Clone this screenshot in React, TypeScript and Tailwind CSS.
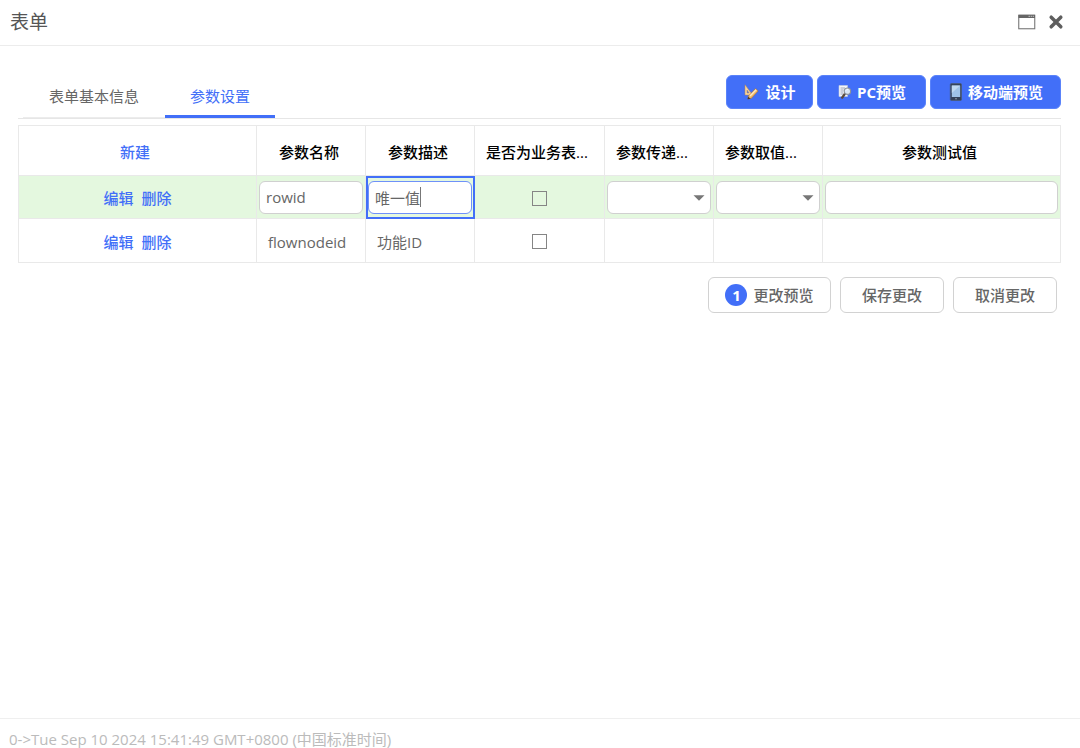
import { useState } from "react";

const font = "font-['Open_Sans','Noto_Sans_CJK_SC',sans-serif]";

function DesignIcon() {
  return (
    <svg width="16" height="16" viewBox="0 0 16 16" aria-hidden="true">
      <path d="M2 0.8 L2 11 L9.6 11 Z M4 6 L6.2 9 L4 9 Z" fill="#f6d6a4" fillRule="evenodd" stroke="#c08a48" strokeWidth="0.5" />
      <path d="M5.4 12 L12.6 4.6 L15.2 7 L8.2 14.4 L4.8 15 Z" fill="#f0b868" stroke="#9a6427" strokeWidth="0.5" />
      <path d="M7 12 L13.2 5.8" stroke="#fdebc6" strokeWidth="1.4" />
      <path d="M4.6 15.2 L5.2 12.8 L7.6 14.7 Z" fill="#4a3a2a" />
    </svg>
  );
}

function PreviewIcon() {
  return (
    <svg width="16" height="16" viewBox="0 0 16 16" aria-hidden="true">
      <path d="M2 1.5 H10.5 V12.5 H2 Z" fill="#f4f6fa" stroke="#c3cddd" strokeWidth="0.6" />
      <path d="M3.5 4 H8 M3.5 6 H6.5 M3.5 8 H6 M3.5 10 H6" stroke="#8b96a8" strokeWidth="0.8" />
      <path d="M8 9.6 L5.2 13.6" stroke="#5b4a3c" strokeWidth="2.4" strokeLinecap="round" />
      <circle cx="10.4" cy="7.2" r="3.2" fill="#d9e6f5" stroke="#8d949c" strokeWidth="1.2" />
      <path d="M8.9 6.6 Q9.6 5.3 11.1 5.5" stroke="#ffffff" strokeWidth="0.9" fill="none" />
    </svg>
  );
}

function PhoneIcon() {
  return (
    <svg width="16" height="18" viewBox="0 0 16 18" aria-hidden="true">
      <rect x="2.3" y="0.5" width="11.2" height="17" rx="1.2" fill="#35435a" stroke="#4a5c7c" strokeWidth="0.8" />
      <rect x="3.8" y="2.6" width="8.4" height="11.4" fill="#9fc3e8" />
      <path d="M3.8 2.6 H12.2 L3.8 10 Z" fill="#c0d9f1" />
      <circle cx="8" cy="15.8" r="0.8" fill="#9aa4b2" />
    </svg>
  );
}

function WindowIcon() {
  return (
    <svg width="18" height="16" viewBox="0 0 18 16" aria-hidden="true">
      <rect x="0.75" y="1.25" width="16" height="13.5" fill="#fff" stroke="#777" strokeWidth="1.1" />
      <rect x="0.5" y="0.8" width="16.5" height="3.2" fill="#666" />
      <path d="M10.5 2.3 H12 M12.7 2.3 H14 M14.7 2.3 H16" stroke="#ccc" strokeWidth="0.9" />
    </svg>
  );
}

function CloseIcon() {
  return (
    <svg width="16" height="16" viewBox="0 0 16 16" aria-hidden="true">
      <path d="M3.2 3.2 L12.8 12.8 M12.8 3.2 L3.2 12.8" stroke="#5e5e5e" strokeWidth="3.5" strokeLinecap="round" />
    </svg>
  );
}

const columns = [
  { id: "name", label: "参数名称", clipped: false },
  { id: "desc", label: "参数描述", clipped: false },
  { id: "biz", label: "是否为业务表...", clipped: true },
  { id: "pass", label: "参数传递...", clipped: true },
  { id: "source", label: "参数取值...", clipped: true },
  { id: "test", label: "参数测试值", clipped: false },
];

const primary =
  "flex h-[34px] items-center rounded-md border border-[#5a83fa] bg-[#426ff8] font-bold text-white";
const secondary =
  "flex h-9 items-center justify-center rounded-md border border-[#d2d2d2] bg-white font-medium text-[#666]";
const field =
  "block h-[33px] w-full rounded-md border bg-white px-[6px] text-[#666] outline-none";
const box =
  "block size-[15px] mx-auto appearance-none border border-[#858585] checked:bg-[#426ff8]";

function RowActions() {
  return (
    <div className="flex justify-center gap-2 font-medium text-[#426ff8]">
      <a href="#edit">编辑</a>
      <a href="#delete">删除</a>
    </div>
  );
}

function Dropdown({ labelledBy }: { labelledBy: string }) {
  return (
    <div className="relative">
      <select aria-labelledby={labelledBy} className={`${field} appearance-none border-[#d0d0d0]`}>
        <option value=""></option>
      </select>
      <svg className="pointer-events-none absolute top-[14px] right-[6px]" width="12" height="6" viewBox="0 0 12 6" aria-hidden="true">
        <path d="M0.5 0.3 H11.5 L6 5.8 Z" fill="#777" />
      </svg>
    </div>
  );
}

export default function App() {
  const [name, setName] = useState("rowid");
  const [desc, setDesc] = useState("唯一值");
  const [test, setTest] = useState("");

  return (
    <div className={`flex min-h-screen flex-col bg-white text-[15px] leading-5 text-[#666] ${font}`}>
      <header className="flex h-[46px] items-center justify-between border-b border-[#ececec] pr-4 pb-[2px] pl-[10px]">
        <h1 className="text-[19px] leading-6 text-[#555]">表单</h1>
        <div className="flex items-center gap-3">
          <button type="button" aria-label="最大化"><WindowIcon /></button>
          <button type="button" aria-label="关闭"><CloseIcon /></button>
        </div>
      </header>

      <main className="flex-1 pt-[29px] pr-[19px] pl-[18px]">
        <div className="flex h-11 justify-between border-b border-[#e6e6e6]">
          <div role="tablist" className="flex pl-[5px]">
            <button type="button" role="tab" aria-selected="false" className="w-[142px] border-b border-[#ececec] pb-px">
              表单基本信息
            </button>
            <button type="button" role="tab" aria-selected="true" className="w-[110px] border-b-3 border-[#426ff8] pt-px text-[#426ff8]">
              参数设置
            </button>
          </div>
          <div className="flex gap-1">
            <button type="button" className={`${primary} w-[87px] justify-center gap-[6px]`}>
              <DesignIcon />设计
            </button>
            <button type="button" className={`${primary} w-[109px] justify-center gap-1`}>
              <PreviewIcon />PC预览
            </button>
            <button type="button" className={`${primary} w-[131px] justify-center gap-1`}>
              <PhoneIcon />移动端预览
            </button>
          </div>
        </div>

        <table className="mt-[6px] w-full table-fixed border-collapse [&_td]:border [&_td]:border-[#e9e9e9] [&_th]:border [&_th]:border-[#e9e9e9]">
          <colgroup>
            <col />
            <col className="w-[109px]" />
            <col className="w-[109px]" />
            <col className="w-[130px]" />
            <col className="w-[109px]" />
            <col className="w-[109px]" />
            <col />
          </colgroup>
          <thead>
            <tr className="h-[50px] text-black">
              <th className="pt-[2px] pr-[5px] pb-0 font-medium text-[#426ff8]">
                <a href="#new">新建</a>
              </th>
              {columns.map((c) => (
                <th
                  key={c.id}
                  id={c.id}
                  className={`pt-[2px] pb-0 font-medium whitespace-nowrap ${c.clipped ? "pl-[11px] text-left" : "pr-1 text-center"}`}
                >
                  {c.label}
                </th>
              ))}
            </tr>
          </thead>
          <tbody>
            <tr className="h-[43px] bg-[#e4f8df] [&_td]:border-[#d5ead1]">
              <td className="p-0 pt-[2px]"><RowActions /></td>
              <td className="px-[2px] py-0">
                <input aria-labelledby="name" value={name} onChange={(e) => setName(e.target.value)} className={`${field} border-[#d0d0d0]`} />
              </td>
              <td className="px-[2px] py-0 outline-2 -outline-offset-2 outline-[#426ff8]">
                <div className="relative">
                  <input aria-labelledby="desc" value={desc} onChange={(e) => setDesc(e.target.value)} className={`${field} border-[#6f91f9]`} />
                  <span className="absolute top-[6px] left-[52px] h-5 w-px bg-[#777]" />
                </div>
              </td>
              <td className="p-0 pt-[2px]">
                <input type="checkbox" aria-labelledby="biz" className={box} />
              </td>
              <td className="px-[2px] py-0"><Dropdown labelledBy="pass" /></td>
              <td className="px-[2px] py-0"><Dropdown labelledBy="source" /></td>
              <td className="px-[2px] py-0">
                <input aria-labelledby="test" value={test} onChange={(e) => setTest(e.target.value)} className={`${field} border-[#d0d0d0]`} />
              </td>
            </tr>
            <tr className="h-11">
              <td className="p-0 pt-[2px]"><RowActions /></td>
              <td className="px-[11px] pt-[2px] pb-0">flownodeid</td>
              <td className="px-[11px] pt-[2px] pb-0">功能ID</td>
              <td className="p-0 pt-[2px]">
                <input type="checkbox" aria-labelledby="biz" className={box} />
              </td>
              <td />
              <td />
              <td />
            </tr>
          </tbody>
        </table>

        <div className="flex justify-end gap-[9px] pt-[14px] pr-1">
          <button type="button" className={`${secondary} w-[123px] gap-[6px]`}>
            <span className="flex size-[22px] items-center justify-center rounded-full bg-[#426ff8] font-bold text-white">1</span>
            更改预览
          </button>
          <button type="button" className={`${secondary} w-[104px]`}>保存更改</button>
          <button type="button" className={`${secondary} w-[104px]`}>取消更改</button>
        </div>
      </main>

      <footer className="border-t border-[#efefef] pt-3 pb-px pl-[9px] leading-4 text-[#bbb]">
        0-&gt;Tue Sep 10 2024 15:41:49 GMT+0800 (中国标准时间)
      </footer>
    </div>
  );
}
